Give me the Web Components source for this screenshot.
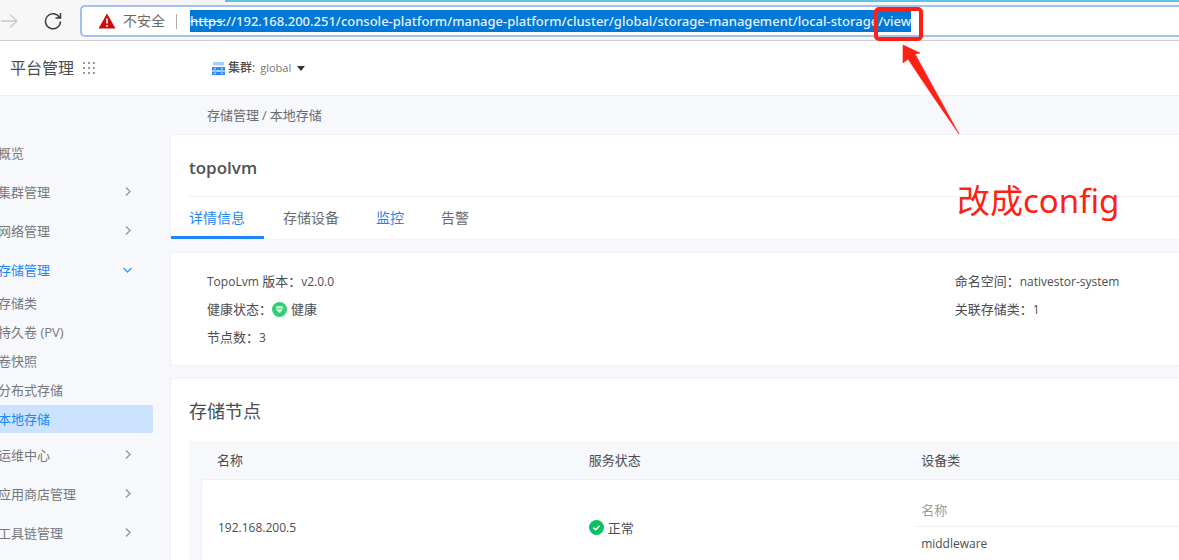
<!DOCTYPE html>
<html lang="zh-CN">
<head>
<meta charset="utf-8">
<title>平台管理 - 本地存储</title>
<style>
  html { overflow: hidden; }
  body {
    margin: 0;
    background: #f7f8fc;
    color: #4b4d52;
    font: 13px/20px "Open Sans", "Noto Sans CJK SC", sans-serif;
  }
</style>
</head>
<body>
<console-page></console-page>

<script>
const define = (name, html) => {
  const template = document.createElement('template');
  template.innerHTML = html;
  customElements.define(name, class extends HTMLElement {
    constructor() {
      super();
      this.attachShadow({ mode: 'open' }).append(template.content.cloneNode(true));
    }
  });
};

define('browser-bar', `
<style>
  :host { display: flex; align-items: center; height: 38px; padding-top: 2px; background: #f7f7f8; border-bottom: 1px solid #d0d0d1; position: relative; }
  .strip { position: absolute; top: 0; left: 225px; right: 0; height: 2px; background: #5cc3e0; }
  button { border: 0; background: none; padding: 0; display: flex; }
  .forward { width: 18px; margin-right: 26px; }
  .reload { width: 18px; margin-right: 18px; }
  .box { flex: 1; min-width: 0; display: flex; align-items: center; box-sizing: border-box; height: 32px; border: 2px solid #a3c0ef; border-right: 0; border-radius: 5px 0 0 5px; background: #fff; padding-left: 16px; font-size: 14px; color: #6a6a6a; }
  .warn { margin-right: 7px; }
  .sep { width: 1px; height: 15px; background: #aaa; margin: 0 13px 0 11px; }
  .url { position: relative; display: flex; min-width: 0; }
  .url::before { content: ""; position: absolute; left: 0; top: 11px; width: 34px; height: 1px; background: #fff; }
  input { field-sizing: content; border: 0; padding: 0; margin: 0; height: 22px; background: #0078d7; color: #e6f1fb; font: 500 13px/22px "Noto Sans", "Noto Sans CJK SC", sans-serif; outline: 0; border-radius: 0; }
</style>
<div class="strip"></div>
<button class="forward" aria-label="前进"><svg width="18" height="16" viewBox="0 0 18 16" fill="none" stroke="#c9c9c9" stroke-width="1.3"><path d="M1 8H17M10 1.500L17 8L10 14.500"/></svg></button>
<button class="reload" aria-label="刷新"><svg width="18" height="18" viewBox="0 0 18 18" fill="none" stroke="#3c3c3c" stroke-width="1.500"><path d="M15.500 5.500A7.500 7.500 0 1 0 16.500 9.500M16.500 1V6H11.500"/></svg></button>
<div class="box">
  <svg class="warn" width="18" height="16" viewBox="0 0 18 16"><path d="M9 .5L17.500 15.500H.5Z" fill="#cc0c0c"/><path d="M9 5.500V10.500M9 12V13.800" stroke="#fff" stroke-width="1.600"/></svg>
  <span>不安全</span><span class="sep"></span>
  <div class="url"><input type="text" aria-label="地址" value="https://192.168.200.251/console-platform/manage-platform/cluster/global/storage-management/local-storage/view"></div>
</div>`);

define('app-header', `
<style>
  :host { display: flex; align-items: center; height: 54px; background: #fff; border-bottom: 1px solid #efeff1; padding-left: 10px; }
  .title { font-size: 16px; line-height: 24px; }
  .apps { margin: 0 116px 0 9px; }
  button { border: 0; background: none; padding: 0; display: flex; align-items: center; color: inherit; font: 12px/20px "Open Sans", "Noto Sans CJK SC", sans-serif; }
  b { font-weight: 500; margin: 0 5px 0 3px; }
  .name { color: #777; font-size: 11px; }
  .caret { margin-left: 6px; }
</style>
<span class="title">平台管理</span>
<svg class="apps" width="13" height="13" viewBox="0 0 13 13" fill="#999"><path d="M0 0h2v2H0zM5 0h2v2H5zM10 0h2v2h-2zM0 5h2v2H0zM5 5h2v2H5zM10 5h2v2h-2zM0 10h2v2H0zM5 10h2v2H5zM10 10h2v2h-2z"/></svg>
<button>
  <svg width="13" height="13" viewBox="0 0 13 13"><path d="M1 0h11v3.500H1z" fill="#9fd0ff"/><path d="M0 5h13v3.500H0zM0 9.500h13V13H0z" fill="#2a8cff"/><path d="M2 6.300h2v1H2zM9 6.300h2v1H9zM2 10.800h2v1H2zM9 10.800h2v1H9zM5 8.500h3v1H5z" fill="#d8ecff"/></svg>
  <b>集群:</b><span class="name">global</span>
  <svg class="caret" width="8" height="5" viewBox="0 0 8 5"><path d="M0 0H8L4 5Z" fill="#333"/></svg>
</button>`);

define('nav-group', `
<style>
  :host { display: block; }
  a { display: flex; align-items: center; justify-content: space-between; height: 39px; padding-right: 21px; color: #75777b; text-decoration: none; }
  :host([open]) a { color: #1f86f8; }
  svg { fill: none; stroke: #929497; stroke-width: 1.300; }
  :host([leaf]) svg { display: none; }
  :host([open]) svg { transform: rotate(90deg); stroke: #3b97fb; }
  .sub { display: grid; gap: 1px; }
  :host([open]) .sub { margin-bottom: 2px; }
</style>
<a href="#"><slot name="label"></slot><svg width="9" height="9" viewBox="0 0 9 9"><path d="M3 .5L7 4.500L3 8.500"/></svg></a>
<div class="sub"><slot></slot></div>`);

define('nav-item', `
<style>
  :host { display: block; }
  a { display: flex; align-items: center; height: 28px; color: #75777b; text-decoration: none; }
  :host([active]) a { color: #1f86f8; background: #cbe3ff; border-radius: 0 2px 2px 0; }
</style>
<a href="#"><slot></slot></a>`);

define('side-nav', `
<style>
  /* The rail is scrolled slightly past the window's left edge. */
  :host { display: block; width: 155px; margin-left: -2px; padding-top: 37px; flex: none; }
</style>
<nav>
  <nav-group leaf><span slot="label">概览</span></nav-group>
  <nav-group><span slot="label">集群管理</span></nav-group>
  <nav-group><span slot="label">网络管理</span></nav-group>
  <nav-group open><span slot="label">存储管理</span>
    <nav-item>存储类</nav-item>
    <nav-item>持久卷 (PV)</nav-item>
    <nav-item>卷快照</nav-item>
    <nav-item>分布式存储</nav-item>
    <nav-item active>本地存储</nav-item>
  </nav-group>
  <nav-group><span slot="label">运维中心</span></nav-group>
  <nav-group><span slot="label">应用商店管理</span></nav-group>
  <nav-group><span slot="label">工具链管理</span></nav-group>
</nav>`);

define('content-card', `
<style>
  :host { display: block; background: #fff; border-radius: 3px 0 0 3px; box-shadow: 0 0 3px #e6e8ee; padding-left: 18px; }
</style>
<slot></slot>`);

define('detail-tabs', `
<style>
  :host { display: block; }
  h1 { margin: 0; padding: 20px 0 16px; font-size: 17px; line-height: 25px; font-weight: 600; color: #505257; border-bottom: 1px solid #eeeff2; }
  nav { display: flex; gap: 1px; margin-left: -18px; }
  a { box-sizing: border-box; height: 42px; padding: 0 18px; line-height: 42px; font-size: 14px; color: #6a6c70; text-decoration: none; }
  a.blue, a.active { color: #1f86f8; }
  a.active { border-bottom: 3px solid #1f86f8; padding-right: 19px; }
</style>
<h1>topolvm</h1>
<nav><a class="active" href="#">详情信息</a><a href="#">存储设备</a><a class="blue" href="#">监控</a><a href="#">告警</a></nav>`);

define('info-field', `
<style>
  :host { display: block; height: 28px; line-height: 28px; }
</style>
<span><slot name="label"></slot>：</span><span><slot></slot></span>`);

define('health-icon', `
<style>:host { display: inline-block; vertical-align: middle; height: 17px; margin-right: 4px; } svg { display: block; }</style>
<svg width="15" height="15" viewBox="0 0 15 15"><circle cx="7.500" cy="7.500" r="7.500" fill="#34cd74"/><path d="M4.800 4.300H10.200L11.500 6.200H3.500ZM4 7.200H11L7.500 11.200Z" fill="#e9fff2"/></svg>`);

define('ok-icon', `
<style>:host { display: flex; }</style>
<svg width="15" height="15" viewBox="0 0 15 15"><circle cx="7.500" cy="7.500" r="7.500" fill="#08c160"/><path d="M4.300 7.600L6.600 9.800L10.700 5.700" fill="none" stroke="#fff" stroke-width="1.500"/></svg>`);

define('info-grid', `
<style>
  :host { display: grid; grid-template-columns: 10fr 3fr; padding: 14px 0 14px 18px; }
  .latin { font-size: 12px; }
  .name { font-weight: 500; }
</style>
<div>
  <info-field><span slot="label"><span class="latin name">TopoLvm</span> 版本</span><span class="latin">v2.0.0</span></info-field>
  <info-field><span slot="label">健康状态</span><health-icon></health-icon>健康</info-field>
  <info-field><span slot="label">节点数</span><span class="latin">3</span></info-field>
</div>
<div>
  <info-field><span slot="label">命名空间</span><span class="latin">nativestor-system</span></info-field>
  <info-field><span slot="label">关联存储类</span><span class="latin">1</span></info-field>
</div>`);

define('node-table', `
<style>
  :host { display: block; padding-top: 20px; }
  h2 { margin: 0 0 17px; font-size: 18px; line-height: 25px; font-weight: 400; }
  .frame { background: #f7f8fc; padding-left: 12px; }
  table { width: 100%; border-collapse: separate; border-spacing: 0; table-layout: fixed; }
  th { text-align: left; font-weight: 400; }
  .nodes > thead th { height: 38px; padding: 0 0 0 16px; }
  .nodes > tbody > tr > td { background: #fff; padding: 14px 0 14px 16px; border-top: 1px solid #eeeff3; }
  .nodes > tbody > tr > td:first-child { border-left: 1px solid #eeeff3; border-top-left-radius: 3px; }
  .nodes > tbody > tr > td.devices { padding-left: 10px; }
  .devices th { height: 32px; padding: 0 6px; color: #9b9da1; border-bottom: 1px solid #eeeff2; }
  .devices td { height: 34px; padding: 0 6px; }
  .latin, .devices td { font-size: 12px; }
  .state { display: flex; align-items: center; gap: 4px; }
</style>
<h2>存储节点</h2>
<div class="frame">
  <table class="nodes">
    <colgroup><col style="width:38%"><col style="width:34%"><col style="width:28%"></colgroup>
    <thead><tr><th>名称</th><th>服务状态</th><th>设备类</th></tr></thead>
    <tbody><tr>
      <td class="latin">192.168.200.5</td>
      <td><span class="state"><ok-icon></ok-icon>正常</span></td>
      <td class="devices"><table><thead><tr><th>名称</th></tr></thead><tbody><tr><td>middleware</td></tr></tbody></table></td>
    </tr></tbody>
  </table>
</div>`);

/* Red mark-up drawn over the page: a frame, an arrow and a note. */
define('red-note', `
<style>
  :host { position: absolute; top: 7px; left: 874px; color: #ff1f14; }
  svg { display: block; overflow: visible; }
  p { position: absolute; left: 83px; top: 170px; margin: 0; white-space: nowrap; font: 33px/48px "Noto Sans", "Noto Sans CJK SC", sans-serif; }
</style>
<svg width="86" height="128" viewBox="0 0 86 128"><rect x="2" y="2" width="45" height="30" rx="3" fill="none" stroke="currentColor" stroke-width="4"/><path d="M29 38L46 46L41 47Q58 78 85 127Q55 84 34 52L29 56Z" fill="currentColor" stroke="currentColor" stroke-width=".6"/></svg>
<p>改成config</p>`);

define('console-page', `
<style>
  :host { display: block; }
  .body { display: flex; }
  main { flex: 1; min-width: 0; padding-left: 18px; }
  .crumbs { display: flex; gap: 3px; height: 37px; padding-bottom: 2px; align-items: center; padding-left: 36px; color: #6a6c70; }
  .crumbs a { color: inherit; text-decoration: none; }
  .cards { display: grid; gap: 14px; }
</style>
<browser-bar></browser-bar>
<app-header></app-header>
<div class="body">
  <side-nav></side-nav>
  <main>
    <div class="crumbs"><a href="#">存储管理</a><span>/</span><span>本地存储</span></div>
    <div class="cards">
      <content-card><detail-tabs></detail-tabs></content-card>
      <content-card><info-grid></info-grid></content-card>
      <content-card><node-table></node-table></content-card>
    </div>
  </main>
</div>
<red-note></red-note>`);
</script>
</body>
</html>
